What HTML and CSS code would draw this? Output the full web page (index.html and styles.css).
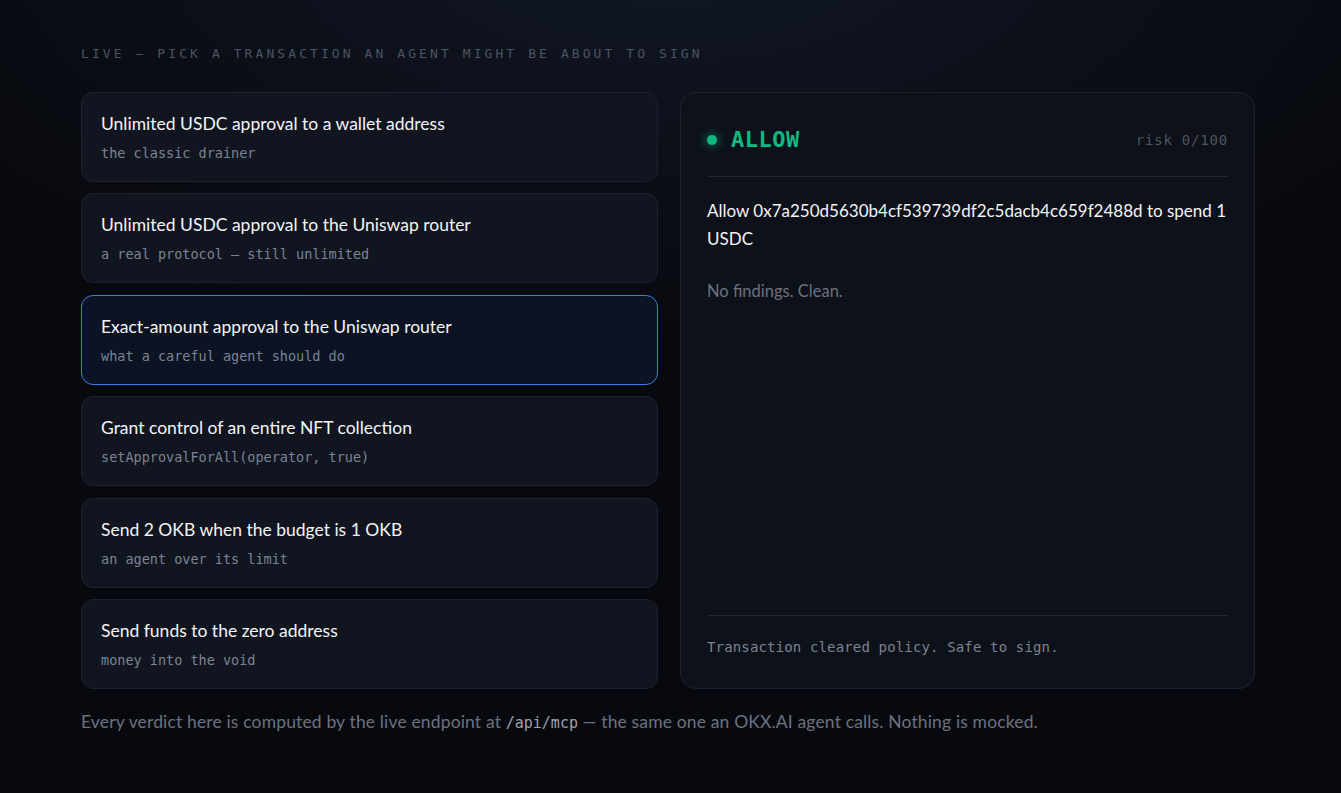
FILE: index.html
```html
<!DOCTYPE html>
<html lang="en">
<head>
<meta charset="utf-8">
<title>Live demo</title>
<link rel="stylesheet" href="styles.css">
</head>
<body>
<main class="page">
  <p class="eyebrow">LIVE — PICK A TRANSACTION AN AGENT MIGHT BE ABOUT TO SIGN</p>
  <div class="grid">
    <div class="list">
      <button class="card"><span class="card-title">Unlimited USDC approval to a wallet address</span><span class="card-sub">the classic drainer</span></button>
      <button class="card"><span class="card-title">Unlimited USDC approval to the Uniswap router</span><span class="card-sub">a real protocol — still unlimited</span></button>
      <button class="card active"><span class="card-title">Exact-amount approval to the Uniswap router</span><span class="card-sub">what a careful agent should do</span></button>
      <button class="card"><span class="card-title">Grant control of an entire NFT collection</span><span class="card-sub">setApprovalForAll(operator, true)</span></button>
      <button class="card"><span class="card-title">Send 2 OKB when the budget is 1 OKB</span><span class="card-sub">an agent over its limit</span></button>
      <button class="card"><span class="card-title">Send funds to the zero address</span><span class="card-sub">money into the void</span></button>
    </div>
    <section class="panel">
      <header class="verdict">
        <div class="verdict-left"><span class="dot"></span><span class="verdict-label">ALLOW</span></div>
        <span class="risk">risk 0/100</span>
      </header>
      <p class="summary">Allow 0x7a250d5630b4cf539739df2c5dacb4c659f2488d to spend 1 USDC</p>
      <p class="findings">No findings. Clean.</p>
      <footer class="panel-foot">Transaction cleared policy. Safe to sign.</footer>
    </section>
  </div>
  <p class="note">Every verdict here is computed by the live endpoint at <code>/api/mcp</code> — the same one an OKX.AI agent calls. Nothing is mocked.</p>
</main>
</body>
</html>
```

FILE: styles.css
```css
* { box-sizing: border-box; }
html, body { margin: 0; padding: 0; }
body {
  min-height: 793px;
  background: radial-gradient(ellipse 900px 420px at 50% -60px, #111827 0%, #0b0e16 60%, #08090e 100%), #08090e;
  background-color: #08090e;
  color: #e5e7eb;
  font-family: Lato, "Noto Sans", sans-serif;
}
.page {
  width: 1174px;
  margin: 0 0 0 81px;
  padding-top: 44px;
}
.eyebrow {
  margin: 0 0 28px;
  font-family: "DejaVu Sans Mono", monospace;
  font-size: 13px;
  letter-spacing: 3.08px;
  color: #4b5563;
  line-height: 20px;
}
.grid {
  display: grid;
  grid-template-columns: 577px 575px;
  column-gap: 22px;
}
.list {
  display: flex;
  flex-direction: column;
  gap: 11.4px;
}
.card {
  display: flex;
  flex-direction: column;
  align-items: flex-start;
  gap: 7px;
  height: 90px;
  padding: 19px 19px 0;
  background: #111520;
  border: 1px solid #1d2230;
  border-radius: 12px;
  text-align: left;
  cursor: pointer;
}
.card.active {
  background: #0c1322;
  border-color: #3b7ce0;
}
.card-title {
  font-family: Lato, "Noto Sans", sans-serif;
  font-size: 17.5px;
  line-height: 24px;
  color: #f3f4f6;
}
.card-sub {
  font-family: "DejaVu Sans Mono", monospace;
  font-size: 13.5px;
  line-height: 20px;
  color: #7b8494;
}
.panel {
  display: flex;
  flex-direction: column;
  background: #0d1119;
  border: 1px solid #1d2230;
  border-radius: 16px;
  padding: 27px 26px 0;
}
.verdict {
  display: flex;
  justify-content: space-between;
  align-items: center;
  border-bottom: 1px solid #1f2533;
  height: 57px;
  padding-bottom: 17px;
}
.verdict-left { display: flex; align-items: center; gap: 14px; }
.dot {
  width: 10px; height: 10px; border-radius: 50%;
  background: #10b981;
  box-shadow: 0 0 10px 2px rgba(16,185,129,0.45);
}
.verdict-label {
  font-family: "DejaVu Sans Mono", monospace;
  font-weight: bold;
  font-size: 22px;
  letter-spacing: 0.5px;
  color: #10b981;
}
.risk {
  font-family: "DejaVu Sans Mono", monospace;
  font-size: 14px;
  letter-spacing: 0.8px;
  color: #4b5563;
}
.summary {
  margin: 20px 0 0;
  font-size: 17px;
  line-height: 28px;
  color: #f3f4f6;
}
.findings {
  margin: 26px 0 0;
  font-size: 16.5px;
  line-height: 24px;
  color: #6b7280;
}
.panel-foot {
  margin-top: auto;
  border-top: 1px solid #1f2533;
  height: 73px;
  padding-top: 20px;
  font-family: "DejaVu Sans Mono", monospace;
  font-size: 14px;
  letter-spacing: 0.15px;
  line-height: 22px;
  color: #7b8494;
}
.note {
  margin: 21px 0 0;
  font-size: 17.5px;
  letter-spacing: 0.15px;
  line-height: 24px;
  color: #6b7280;
}
.note code {
  font-family: "DejaVu Sans Mono", monospace;
  font-size: 15px;
  letter-spacing: 0;
  color: #9ca3af;
}
```
